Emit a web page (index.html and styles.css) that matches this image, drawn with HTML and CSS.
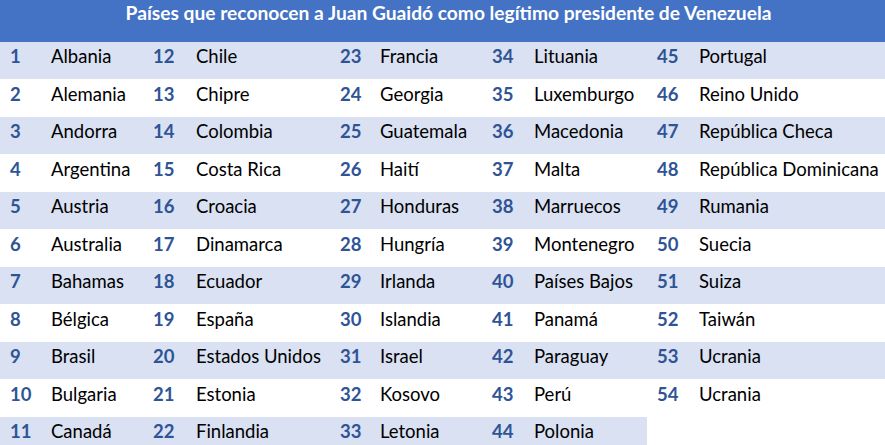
FILE: index.html
```html
<!DOCTYPE html>
<html lang="es">
<head>
<meta charset="utf-8">
<title>Países que reconocen a Juan Guaidó</title>
<link rel="stylesheet" href="styles.css">
</head>
<body>
<div class="sheet">
  <div class="title">Países que reconocen a Juan Guaidó como legítimo presidente de Venezuela</div>
  <div class="row odd"><span class="num">1</span><span class="name">Albania</span><span class="num">12</span><span class="name">Chile</span><span class="num">23</span><span class="name">Francia</span><span class="num">34</span><span class="name">Lituania</span><span class="num">45</span><span class="name">Portugal</span></div>
  <div class="row"><span class="num">2</span><span class="name">Alemania</span><span class="num">13</span><span class="name">Chipre</span><span class="num">24</span><span class="name">Georgia</span><span class="num">35</span><span class="name">Luxemburgo</span><span class="num">46</span><span class="name">Reino Unido</span></div>
  <div class="row odd"><span class="num">3</span><span class="name">Andorra</span><span class="num">14</span><span class="name">Colombia</span><span class="num">25</span><span class="name">Guatemala</span><span class="num">36</span><span class="name">Macedonia</span><span class="num">47</span><span class="name">República Checa</span></div>
  <div class="row"><span class="num">4</span><span class="name">Argentina</span><span class="num">15</span><span class="name">Costa Rica</span><span class="num">26</span><span class="name">Haití</span><span class="num">37</span><span class="name">Malta</span><span class="num">48</span><span class="name">República Dominicana</span></div>
  <div class="row odd"><span class="num">5</span><span class="name">Austria</span><span class="num">16</span><span class="name">Croacia</span><span class="num">27</span><span class="name">Honduras</span><span class="num">38</span><span class="name">Marruecos</span><span class="num">49</span><span class="name">Rumania</span></div>
  <div class="row"><span class="num">6</span><span class="name">Australia</span><span class="num">17</span><span class="name">Dinamarca</span><span class="num">28</span><span class="name">Hungría</span><span class="num">39</span><span class="name">Montenegro</span><span class="num">50</span><span class="name">Suecia</span></div>
  <div class="row odd"><span class="num">7</span><span class="name">Bahamas</span><span class="num">18</span><span class="name">Ecuador</span><span class="num">29</span><span class="name">Irlanda</span><span class="num">40</span><span class="name">Países Bajos</span><span class="num">51</span><span class="name">Suiza</span></div>
  <div class="row"><span class="num">8</span><span class="name">Bélgica</span><span class="num">19</span><span class="name">España</span><span class="num">30</span><span class="name">Islandia</span><span class="num">41</span><span class="name">Panamá</span><span class="num">52</span><span class="name">Taiwán</span></div>
  <div class="row odd"><span class="num">9</span><span class="name">Brasil</span><span class="num">20</span><span class="name">Estados Unidos</span><span class="num">31</span><span class="name">Israel</span><span class="num">42</span><span class="name">Paraguay</span><span class="num">53</span><span class="name">Ucrania</span></div>
  <div class="row"><span class="num">10</span><span class="name">Bulgaria</span><span class="num">21</span><span class="name">Estonia</span><span class="num">32</span><span class="name">Kosovo</span><span class="num">43</span><span class="name">Perú</span><span class="num">54</span><span class="name">Ucrania</span></div>
  <div class="row odd"><span class="num">11</span><span class="name">Canadá</span><span class="num">22</span><span class="name">Finlandia</span><span class="num">33</span><span class="name">Letonia</span><span class="num">44</span><span class="name">Polonia</span><span class="num empty"></span><span class="name empty"></span></div>
</div>
</body>
</html>
```

FILE: styles.css
```css
html, body {
  margin: 0;
  padding: 0;
  background: #ffffff;
}

.sheet {
  width: 885px;
  height: 445px;
  overflow: hidden;
  font-family: Lato, "Liberation Sans", sans-serif;
  font-size: 18.5px;
}

.title {
  height: 41.7px;
  box-sizing: border-box;
  background: #4472c4;
  color: #ffffff;
  font-weight: bold;
  font-size: 19.2px;
  text-align: center;
  line-height: 24px;
  padding-top: 1px;
  padding-left: 12px;
}

.row {
  display: grid;
  grid-template-columns: 41px 102px 43px 144px 40px 112px 42px 123px 42px 196px;
  height: 37.5px;
}

.row > span {
  display: block;
  box-sizing: border-box;
  padding-left: 10px;
  padding-top: 2.5px;
  line-height: 24px;
  white-space: nowrap;
}

.row.odd > span {
  background: #d9e1f2;
}

.row.odd > span.empty {
  background: transparent;
}

.num {
  color: #2f5496;
  font-weight: bold;
}

.name {
  color: #000000;
}
```
